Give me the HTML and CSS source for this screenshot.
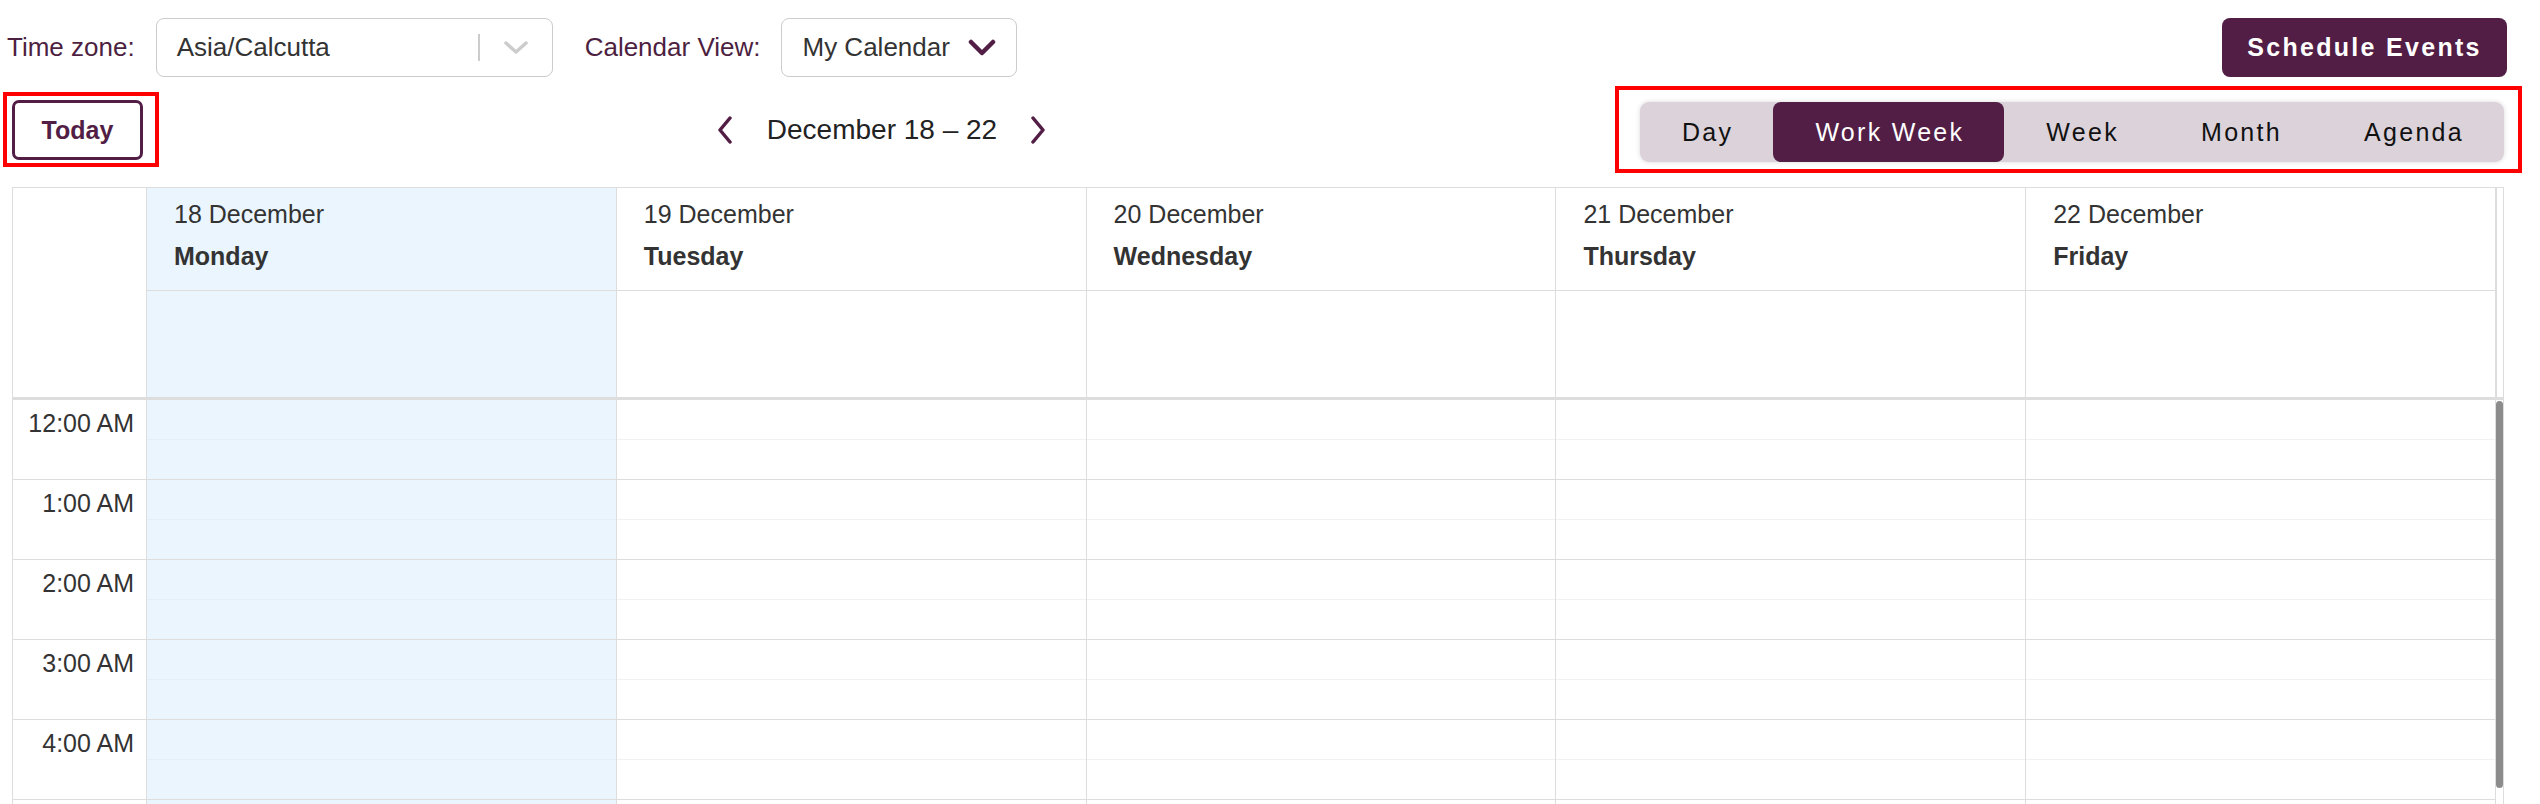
FILE: index.html
```html
<!DOCTYPE html>
<html>
<head>
	<title>Calendar</title>
	<meta name="viewport" content="width=device-width">
	<link rel="stylesheet" href="styles.css">
</head>
<body>
	<div class="page">
		<div class="filters">
			<span class="filter-label">Time zone:</span>
			<div class="select select-tz">
				<span class="select-value">Asia/Calcutta</span>
				<span class="select-sep"></span>
				<svg class="select-arrow" width="26" height="16" viewBox="0 0 26 16"><polyline points="3,3 13,12 23,3" fill="none" stroke="#cccccc" stroke-width="3.5" stroke-linecap="round" stroke-linejoin="round"/></svg>
			</div>
			<span class="filter-label">Calendar View:</span>
			<div class="select select-view">
				<span class="select-value">My Calendar</span>
				<svg width="28" height="18" viewBox="0 0 28 18"><polyline points="3,3 14,14 25,3" fill="none" stroke="#521e45" stroke-width="4.5" stroke-linecap="round" stroke-linejoin="round"/></svg>
			</div>
			<button class="schedule-btn">Schedule Events</button>
		</div>

		<div class="toolbar">
			<div class="mark mark-today">
				<button class="today-btn">Today</button>
			</div>
			<div class="nav">
				<svg width="16" height="28" viewBox="0 0 16 28"><polyline points="13,2 3,14 13,26" fill="none" stroke="#521e45" stroke-width="3.5" stroke-linecap="round" stroke-linejoin="round"/></svg>
				<span class="nav-label">December 18 – 22</span>
				<svg width="16" height="28" viewBox="0 0 16 28"><polyline points="3,2 13,14 3,26" fill="none" stroke="#521e45" stroke-width="3.5" stroke-linecap="round" stroke-linejoin="round"/></svg>
			</div>
			<div class="mark mark-views">
				<div class="views">
					<button class="view-btn">Day</button>
					<button class="view-btn active">Work Week</button>
					<button class="view-btn">Week</button>
					<button class="view-btn">Month</button>
					<button class="view-btn">Agenda</button>
				</div>
			</div>
		</div>

		<div class="calendar">
			<div class="cal-head">
				<div class="head-cell gutter-cell"></div>
				<div class="head-cell today"><div class="date">18 December</div><div class="dow">Monday</div></div>
				<div class="head-cell"><div class="date">19 December</div><div class="dow">Tuesday</div></div>
				<div class="head-cell"><div class="date">20 December</div><div class="dow">Wednesday</div></div>
				<div class="head-cell"><div class="date">21 December</div><div class="dow">Thursday</div></div>
				<div class="head-cell"><div class="date">22 December</div><div class="dow">Friday</div></div>
				<div class="head-gap"></div>

				<div class="allday-cell gutter-cell"></div>
				<div class="allday-cell today"></div>
				<div class="allday-cell"></div>
				<div class="allday-cell"></div>
				<div class="allday-cell"></div>
				<div class="allday-cell"></div>
				<div class="head-gap"></div>
			</div>

			<div class="cal-body">
				<div class="gutter">
					<div class="hour"><span>12:00 AM</span></div>
					<div class="hour"><span>1:00 AM</span></div>
					<div class="hour"><span>2:00 AM</span></div>
					<div class="hour"><span>3:00 AM</span></div>
					<div class="hour"><span>4:00 AM</span></div>
					<div class="hour"></div>
				</div>
				<div class="day today">
					<div class="hour"><div class="half"></div></div>
					<div class="hour"><div class="half"></div></div>
					<div class="hour"><div class="half"></div></div>
					<div class="hour"><div class="half"></div></div>
					<div class="hour"><div class="half"></div></div>
					<div class="hour"><div class="half"></div></div>
				</div>
				<div class="day">
					<div class="hour"><div class="half"></div></div>
					<div class="hour"><div class="half"></div></div>
					<div class="hour"><div class="half"></div></div>
					<div class="hour"><div class="half"></div></div>
					<div class="hour"><div class="half"></div></div>
					<div class="hour"><div class="half"></div></div>
				</div>
				<div class="day">
					<div class="hour"><div class="half"></div></div>
					<div class="hour"><div class="half"></div></div>
					<div class="hour"><div class="half"></div></div>
					<div class="hour"><div class="half"></div></div>
					<div class="hour"><div class="half"></div></div>
					<div class="hour"><div class="half"></div></div>
				</div>
				<div class="day">
					<div class="hour"><div class="half"></div></div>
					<div class="hour"><div class="half"></div></div>
					<div class="hour"><div class="half"></div></div>
					<div class="hour"><div class="half"></div></div>
					<div class="hour"><div class="half"></div></div>
					<div class="hour"><div class="half"></div></div>
				</div>
				<div class="day">
					<div class="hour"><div class="half"></div></div>
					<div class="hour"><div class="half"></div></div>
					<div class="hour"><div class="half"></div></div>
					<div class="hour"><div class="half"></div></div>
					<div class="hour"><div class="half"></div></div>
					<div class="hour"><div class="half"></div></div>
				</div>
				<div class="scrollbar"><div class="thumb"></div></div>
			</div>
		</div>
	</div>
</body>
</html>
```

FILE: styles.css
```css
*{
	margin: 0;
	padding: 0;
	box-sizing: border-box;
}
html, body{
	height: 804px;
	overflow: hidden;
	background: #fff;
}
body{
	font-family: "Liberation Sans", Arial, sans-serif;
	color: #333;
}
button{
	font-family: inherit;
	border: none;
	background: none;
	cursor: pointer;
}
.page{
	padding: 18px 36px 0 12px;
}

/* top filters */
.filters{
	display: flex;
	align-items: center;
	height: 59px;
	margin-left: -5px;
	margin-right: -3px;
}
.filter-label{
	font-size: 26px;
	color: #4d1f41;
	margin-right: 21px;
}
.select{
	display: flex;
	align-items: center;
	height: 59px;
	border: 1.5px solid #cccccc;
	border-radius: 8px;
	font-size: 26px;
	color: #333;
}
.select-tz{
	width: 397px;
	padding: 0 23px 0 20px;
	margin-right: 32px;
}
.select-tz .select-value{
	flex: 1;
}
.select-sep{
	width: 1.5px;
	height: 27px;
	background: #cccccc;
	margin-right: 23px;
}
.select-view{
	width: 236px;
	padding: 0 20px 0 20px;
	justify-content: space-between;
}
.schedule-btn{
	margin-left: auto;
	width: 285px;
	height: 59px;
	border-radius: 8px;
	background: #521e45;
	color: #fff;
	font-size: 25px;
	font-weight: bold;
	letter-spacing: 2.3px;
}

/* toolbar */
.toolbar{
	display: flex;
	align-items: center;
	margin-top: 9px;
	margin-left: -9px;
	margin-right: -18px;
}
.mark{
	border: 4px solid #ff0000;
}
.mark-today{
	padding: 4px 12px 3px 5px;
}
.mark-views{
	padding: 12px 14px 7px 21px;
}
.today-btn{
	display: block;
	width: 131px;
	height: 60px;
	border: 3px solid #521e45;
	border-radius: 7px;
	background: #fff;
	color: #521e45;
	font-size: 25px;
	font-weight: bold;
}
.nav{
	flex: 1;
	display: flex;
	align-items: center;
	justify-content: center;
	padding-right: 11px;
}
.nav svg{
	display: block;
}
.nav-label{
	font-size: 28px;
	color: #222;
	margin: 0 33px 0 34px;
}
.views{
	display: flex;
	height: 60px;
	background: #dbd2da;
	border-radius: 9px;
	box-shadow: 0 0 5px rgba(0, 0, 0, 0.15);
}
.view-btn{
	height: 60px;
	padding: 0 40px 0 42px;
	font-size: 25px;
	letter-spacing: 2.3px;
	color: #111;
	border-radius: 8px;
}
.view-btn.active{
	background: #521e45;
	color: #fff;
}

/* calendar */
.calendar{
	margin-top: 14px;
	border: 1px solid #dddddd;
	border-bottom: none;
}
.cal-head, .cal-body{
	display: grid;
	grid-template-columns: 134px repeat(5, 1fr) 7px;
}
.head-cell{
	height: 103px;
	padding: 12px 0 0 27px;
	border-right: 1px solid #dddddd;
	border-bottom: 1px solid #dddddd;
}
.head-cell.gutter-cell{
	border-bottom: none;
}
.head-cell .date{
	font-size: 25px;
	line-height: 29px;
}
.head-cell .dow{
	font-size: 25px;
	line-height: 29px;
	font-weight: bold;
	margin-top: 13px;
}
.allday-cell{
	height: 106px;
	border-right: 1px solid #dddddd;
}
.today{
	background: #eaf5fe;
}
.head-gap{
	border-left: 1px solid #dddddd;
}
.cal-body{
	border-top: 3px solid #dddddd;
}
.gutter, .day{
	border-right: 1px solid #dddddd;
}
.hour{
	height: 80px;
	border-bottom: 1px solid #dddddd;
}
.gutter .hour{
	text-align: right;
	padding: 9px 12px 0 0;
	font-size: 25px;
	line-height: 29px;
	color: #333;
}
.half{
	height: 40px;
	border-bottom: 1px solid #f1f1f1;
}
.today .half{
	border-bottom-color: #e4eef7;
}
.scrollbar{
	padding-top: 1px;
}
.thumb{
	width: 7px;
	height: 387px;
	border-radius: 4px;
	background: #8c8c8c;
}
```
